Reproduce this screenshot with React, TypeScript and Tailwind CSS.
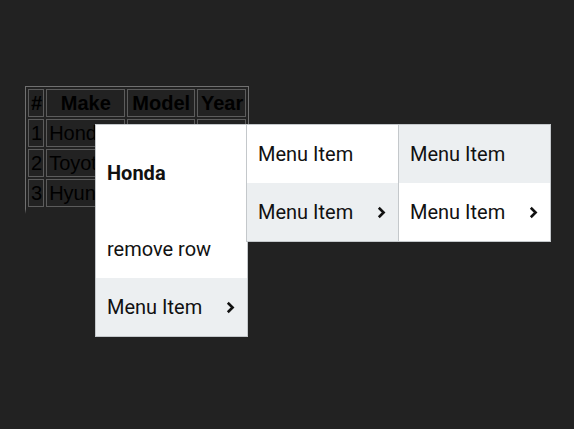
import { ReactNode } from 'react';

const cars = [
  { id: 1, make: 'Honda', model: 'Civic', year: '2017' },
  { id: 2, make: 'Toyota', model: 'Camry', year: '2018' },
  { id: 3, make: 'Hyundai', model: 'Elantra', year: '2019' },
];

function Chevron() {
  return (
    <svg width="9" height="13" viewBox="0 0 9 13" className="shrink-0">
      <path d="M1.8 1.8 L6.6 6.5 L1.8 11.2" fill="none" stroke="#111" strokeWidth="2.6" />
    </svg>
  );
}

function Item({
  children,
  active = false,
  sub = false,
}: {
  children: ReactNode;
  active?: boolean;
  sub?: boolean;
}) {
  return (
    <div
      className={`flex h-[58px] items-center justify-between pl-[11px] pr-[12px] ${
        active ? 'bg-[#eceff1]' : 'bg-white'
      }`}
    >
      <span>{children}</span>
      {sub && <Chevron />}
    </div>
  );
}

export default function App() {
  return (
    <div className="relative min-h-[429px] bg-[#222222] pl-[25px] pt-[86px] font-['Roboto',sans-serif]">
      <table className="border-separate border-spacing-[2px] border border-b-[5px] border-[#707070] border-b-[#222222] font-['Liberation_Sans',Arial,sans-serif] text-[20px] leading-[24px] text-black">
        <thead>
          <tr>
            <th className="border border-[#5c5c5c] pl-[2px] pr-px py-px">#</th>
            <th className="border border-[#5c5c5c] pl-[2px] pr-px py-px">Make</th>
            <th className="border border-[#5c5c5c] pl-[2px] pr-px py-px">Model</th>
            <th className="border border-[#5c5c5c] pl-[2px] pr-px py-px">Year</th>
          </tr>
        </thead>
        <tbody>
          {cars.map((c) => (
            <tr key={c.id}>
              <td className="border border-[#5c5c5c] pl-[2px] pr-px py-px">{c.id}</td>
              <td className="border border-[#5c5c5c] pl-[2px] pr-px py-px">{c.make}</td>
              <td className="border border-[#5c5c5c] pl-[2px] pr-px py-px">{c.model}</td>
              <td className="border border-[#5c5c5c] pl-[2px] pr-px py-px">{c.year}</td>
            </tr>
          ))}
        </tbody>
      </table>

      <div className="absolute left-[95px] top-[124px] w-[153px] border border-[#c4c8cb] text-[20px] text-[#111]">
        <div className="flex h-[95px] items-center bg-white pl-[11px] font-bold">Honda</div>
        <Item>remove row</Item>
        <Item active sub>
          Menu Item
        </Item>
      </div>

      <div className="absolute left-[246px] top-[124px] w-[153px] border border-[#c4c8cb] text-[20px] text-[#111]">
        <Item>Menu Item</Item>
        <Item active sub>
          Menu Item
        </Item>
      </div>

      <div className="absolute left-[398px] top-[124px] w-[153px] border border-[#c4c8cb] text-[20px] text-[#111]">
        <Item active>Menu Item</Item>
        <Item sub>Menu Item</Item>
      </div>
    </div>
  );
}
